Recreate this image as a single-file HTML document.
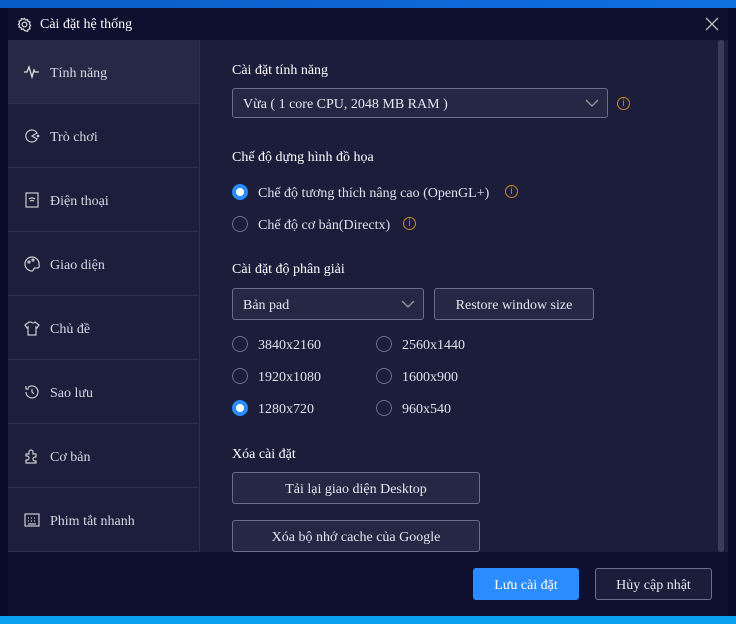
<!DOCTYPE html>
<html><head><meta charset="utf-8"><style>
*{box-sizing:border-box;margin:0;padding:0}
body{width:736px;height:624px;overflow:hidden;background:#0a0c2a;font-family:"Liberation Serif","Noto Serif CJK SC",serif;color:#e6e7ef;font-size:14px;position:relative}
.abs{position:absolute}
.top{left:0;top:0;width:736px;height:8px;background:linear-gradient(90deg,#0a5cc8,#1070e0)}
.bot{left:0;top:616px;width:736px;height:8px;background:#0aa2ee}
.dlg{left:8px;top:8px;width:720px;height:608px;background:#1c1d3b}
.title{left:8px;top:8px;width:720px;height:32px;background:#0f1030}
.side{left:8px;top:40px;width:192px;height:512px;background:#1c1e3b;border-right:1px solid #2e3050}
.item{position:absolute;left:0;width:191px;height:64px;border-bottom:1px solid #2e3050;display:flex;align-items:center;padding-left:16px;font-size:14px;color:#d8d9e4}
.item span{position:relative;top:2px}
.item svg{margin-right:10px}
.foot{left:8px;top:552px;width:720px;height:64px;background:#0f1030}
.h{font-size:14px;color:#fff;transform:translateY(2px)}
.sel{border:1px solid #6d6f88;border-radius:3px;background:#252745;height:30px;display:flex;align-items:center;padding-left:10px;padding-top:3px;color:#e6e7ef}
.btn{border:1px solid #6d6f88;border-radius:3px;background:#252745;height:32px;display:flex;align-items:center;justify-content:center;padding-top:3px;color:#e6e7ef}
.r{position:absolute;width:16px;height:16px;border-radius:50%;border:1px solid #6d6f88}
.r.on{border:none;background:#2a8cff}
.r.on::after{content:"";position:absolute;left:4px;top:4px;width:8px;height:8px;border-radius:50%;background:#fff}
.lbl{position:absolute;font-size:14px;color:#e0e1ea;transform:translateY(2px)}
.info{position:absolute;width:13px;height:13px;border:1px solid #c88a2a;border-radius:50%;color:#c88a2a;font-size:10px;line-height:11px;text-align:center;font-family:"Liberation Sans",sans-serif}
</style></head><body>
<div class="abs top"></div><div class="abs bot"></div>
<div class="abs dlg"></div>
<div class="abs title"></div>
<svg class="abs" style="left:17px;top:17px" width="15" height="15" viewBox="0 0 16 16" fill="none" stroke="#ddd" stroke-width="1.3"><circle cx="8" cy="8" r="2.5"/><path d="M8 1.5l1.2 1.8 2.1-.6.5 2.1 2.1.6-.6 2.1 1.2 1.5-1.2 1.5.6 2.1-2.1.6-.5 2.1-2.1-.6L8 14.5l-1.2-1.8-2.1.6-.5-2.1-2.1-.6.6-2.1L1.5 8l1.2-1.5-.6-2.1 2.1-.6.5-2.1 2.1.6z"/></svg>
<div class="abs" style="left:40px;top:17px;font-size:14px;color:#fff">Cài đặt hệ thống</div>
<svg class="abs" style="left:705px;top:17px" width="14" height="14" stroke="#bbb" stroke-width="1.3"><path d="M1 1L13 13M13 1L1 13"/></svg>
<div class="abs side">
<div class="item" style="top:0;background:#262845"><svg width="16" height="14" fill="none" stroke="#ddd" stroke-width="1.3"><path d="M0 7h3l2-5 3 10 2-7 1 2h4"/></svg><span>Tính năng</span></div>
<div class="item" style="top:64px"><svg width="16" height="16" fill="none" stroke="#ccc" stroke-width="1.2"><path d="M13 5A6 6 0 1 0 13 11L8 8z"/><circle cx="14" cy="8" r=".8" fill="#ccc"/></svg><span>Trò chơi</span></div>
<div class="item" style="top:128px"><svg width="16" height="16" fill="none" stroke="#ccc" stroke-width="1.2"><rect x="2" y="1" width="12" height="14"/><path d="M5 7q3-2 6 0M6 9q2-1 4 0"/></svg><span>Điện thoại</span></div>
<div class="item" style="top:192px"><svg width="16" height="16" fill="none" stroke="#ccc" stroke-width="1.2"><path d="M8 1a7 7 0 1 0 0 14c2 0 1-3 3-3h2a2 2 0 0 0 2-3A7 7 0 0 0 8 1z"/><circle cx="5" cy="6" r="1"/><circle cx="9" cy="4" r="1"/></svg><span>Giao diện</span></div>
<div class="item" style="top:256px"><svg width="16" height="16" fill="none" stroke="#ccc" stroke-width="1.2"><path d="M5 2L1 5l2 3 1-1v8h8V7l1 1 2-3-4-3q-2 2-4 0z"/></svg><span>Chủ đề</span></div>
<div class="item" style="top:320px"><svg width="16" height="16" fill="none" stroke="#ccc" stroke-width="1.2"><path d="M2 8a6 6 0 1 0 2-4.5M2 2v3h3M8 5v3l2 2"/></svg><span>Sao lưu</span></div>
<div class="item" style="top:384px"><svg width="16" height="16" fill="none" stroke="#ccc" stroke-width="1.2"><path d="M2 6h3V4a2 2 0 0 1 4 0v2h3v3h-1a2 2 0 0 0 0 4h1v2H2v-3h1a2 2 0 0 0 0-4H2z"/></svg><span>Cơ bản</span></div>
<div class="item" style="top:448px"><svg width="16" height="14" fill="none" stroke="#ccc" stroke-width="1.2"><rect x="1" y="1" width="14" height="12"/><path d="M4 5h1M7 5h1M10 5h1M4 8h1M7 8h1M10 8h1M4 11h8"/></svg><span>Phim tắt nhanh</span></div>
</div>
<div class="abs" style="left:718px;top:40px;width:6px;height:512px;background:#3a3c58;border-radius:3px"></div>
<div class="abs h" style="left:232px;top:61px">Cài đặt tính năng</div>
<div class="abs sel" style="left:232px;top:88px;width:376px">Vừa ( 1 core CPU, 2048 MB RAM )</div>
<svg class="abs" style="left:585px;top:99px" width="14" height="8" fill="none" stroke="#999" stroke-width="1.3"><path d="M1 1l6 6 6-6"/></svg>
<div class="info" style="left:617px;top:97px">i</div>
<div class="abs h" style="left:232px;top:148px">Chế độ dựng hình đồ họa</div>
<div class="r on" style="left:232px;top:184px"></div><div class="lbl" style="left:258px;top:184px">Chế độ tương thích nâng cao (OpenGL+)</div>
<div class="info" style="left:505px;top:185px">i</div>
<div class="r" style="left:232px;top:216px"></div><div class="lbl" style="left:258px;top:216px">Chế độ cơ bản(Directx)</div>
<div class="info" style="left:403px;top:217px">i</div>
<div class="abs h" style="left:232px;top:260px">Cài đặt độ phân giải</div>
<div class="abs sel" style="left:232px;top:288px;width:192px;height:32px">Bản pad</div>
<svg class="abs" style="left:401px;top:300px" width="14" height="8" fill="none" stroke="#999" stroke-width="1.3"><path d="M1 1l6 6 6-6"/></svg>
<div class="abs btn" style="left:434px;top:288px;width:160px">Restore window size</div>
<div class="r" style="left:232px;top:336px"></div><div class="lbl" style="left:258px;top:336px">3840x2160</div>
<div class="r" style="left:376px;top:336px"></div><div class="lbl" style="left:402px;top:336px">2560x1440</div>
<div class="r" style="left:232px;top:368px"></div><div class="lbl" style="left:258px;top:368px">1920x1080</div>
<div class="r" style="left:376px;top:368px"></div><div class="lbl" style="left:402px;top:368px">1600x900</div>
<div class="r on" style="left:232px;top:400px"></div><div class="lbl" style="left:258px;top:400px">1280x720</div>
<div class="r" style="left:376px;top:400px"></div><div class="lbl" style="left:402px;top:400px">960x540</div>
<div class="abs h" style="left:232px;top:445px">Xóa cài đặt</div>
<div class="abs btn" style="left:232px;top:472px;width:248px">Tải lại giao diện Desktop</div>
<div class="abs btn" style="left:232px;top:520px;width:248px">Xóa bộ nhớ cache của Google</div>
<div class="abs foot"></div>
<div class="abs btn" style="left:473px;top:568px;width:106px;background:#2a8cff;border-color:#2a8cff;color:#fff">Lưu cài đặt</div>
<div class="abs btn" style="left:595px;top:568px;width:117px;background:#1c1d3b">Hủy cập nhật</div>
</body></html>
